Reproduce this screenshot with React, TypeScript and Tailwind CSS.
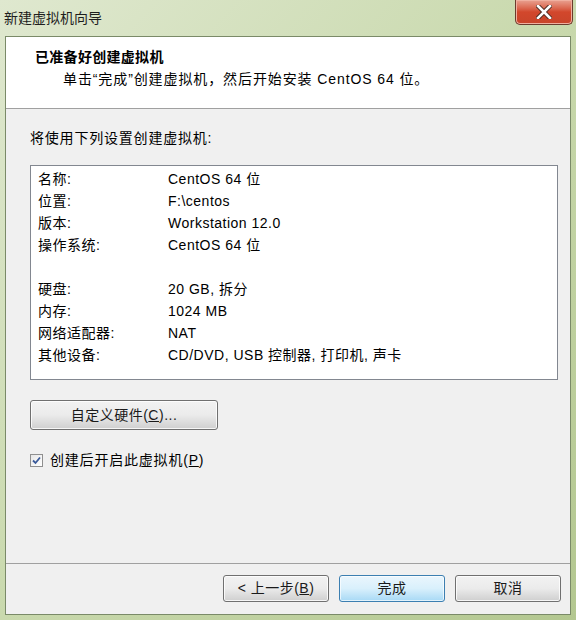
import React from "react";

const font = { fontFamily: '"Liberation Sans", "Noto Sans CJK SC", sans-serif' };

const rows: [string, string][] = [
  ["名称:", "CentOS 64 位"],
  ["位置:", "F:\\centos"],
  ["版本:", "Workstation 12.0"],
  ["操作系统:", "CentOS 64 位"],
  ["", ""],
  ["硬盘:", "20 GB, 拆分"],
  ["内存:", "1024 MB"],
  ["网络适配器:", "NAT"],
  ["其他设备:", "CD/DVD, USB 控制器, 打印机, 声卡"],
];

function Btn({ children, primary, w = "w-[106px]", h = "h-[27px]" }: { children: React.ReactNode; primary?: boolean; w?: string; h?: string }) {
  return (
    <div
      className={`${w} ${h} rounded-[3px] border flex items-center justify-center text-[14px] tracking-[0.5px] text-[#1a1a1a] ${
        primary
          ? "border-[#3c7fb1] bg-gradient-to-b from-[#eaf6fd] via-[#d9f0fc] to-[#a7d9f5] shadow-[inset_0_0_0_1px_#ffffffaa]"
          : "border-[#707070] bg-gradient-to-b from-[#f2f2f2] via-[#ebebeb] to-[#cfcfcf] shadow-[inset_0_0_0_1px_#ffffffcc]"
      }`}
    >
      {children}
    </div>
  );
}

export default function App() {
  return (
    <div
      className="w-[576px] h-[620px] flex flex-col bg-gradient-to-br from-[#dfe8cf] via-[#c9d9ad] to-[#b3c790] overflow-hidden"
      style={font}
    >
      <div className="h-[36px] relative flex items-start pl-[4px] pt-[9px] shrink-0">
        <span className="text-[14px] leading-[18px] text-[#1e1e1e]">新建虚拟机向导</span>
        <div className="absolute right-[3px] top-0 w-[58px] h-[25px] rounded-b-[5px] border border-t-0 border-[#6b3b2e] bg-gradient-to-b from-[#e8a191] via-[#d2472c] to-[#c8442a] flex items-center justify-center shadow-[inset_0_0_0_1px_#f0b0a0]">
          <svg width="16" height="14" viewBox="0 0 16 14">
            <path d="M2 1 L14 13 M14 1 L2 13" stroke="#4a2a22" strokeWidth="4.5" strokeLinecap="square" />
            <path d="M2 1 L14 13 M14 1 L2 13" stroke="#ffffff" strokeWidth="2.6" strokeLinecap="square" />
          </svg>
        </div>
      </div>
      <div className="flex-1 mx-[5px] mb-[5px] border border-[#7a8a68] bg-[#f0f0f0] flex flex-col">
        <div className="h-[72px] bg-white border-b border-[#a0a0a0] pl-[29px] pt-[11px] shrink-0">
          <div className="text-[14px] leading-[18px] font-bold text-black tracking-[0.3px]">已准备好创建虚拟机</div>
          <div className="text-[14px] leading-[18px] text-black mt-[4px] pl-[28px] tracking-[0.9px]">
            单击“完成”创建虚拟机，然后开始安装 CentOS 64 位。
          </div>
        </div>
        <div className="flex-1 px-[24px] pt-[20px] tracking-[0.5px]">
          <div className="text-[14px] leading-[18px] text-black tracking-[0.8px]">将使用下列设置创建虚拟机:</div>
          <div className="mt-[18px] w-[528px] h-[215px] bg-white border border-[#828790] pt-[2px] pl-[7px]">
            {rows.map(([k, v], i) => (
              <div key={i} className="h-[22px] flex items-center text-[14px] text-black">
                <span className="w-[130px]">{k}</span>
                <span>{v}</span>
              </div>
            ))}
          </div>
          <div className="mt-[20px]">
            <Btn w="w-[188px]" h="h-[30px]">
              <span>
                自定义硬件(<span className="underline">C</span>)...
              </span>
            </Btn>
          </div>
          <div className="mt-[21px] flex items-center gap-[7px]">
            <div className="w-[13px] h-[13px] border border-[#8f8f8f] bg-gradient-to-br from-[#e6e6e6] to-[#ffffff] flex items-center justify-center">
              <svg width="9" height="9" viewBox="0 0 9 9">
                <path d="M1 4.5 L3.5 7 L8 1.5" stroke="#3a5a9a" strokeWidth="1.8" fill="none" />
              </svg>
            </div>
            <span className="text-[14px] leading-[18px] text-black tracking-[0.8px]">
              创建后开启此虚拟机(<span className="underline">P</span>)
            </span>
          </div>
        </div>
        <div className="h-[51px] border-t border-[#a0a0a0] flex items-start justify-end gap-[10px] pt-[11px] pr-[9px] shrink-0">
          <Btn>
            <span>
              &lt; 上一步(<span className="underline">B</span>)
            </span>
          </Btn>
          <Btn primary>完成</Btn>
          <Btn>取消</Btn>
        </div>
      </div>
    </div>
  );
}
